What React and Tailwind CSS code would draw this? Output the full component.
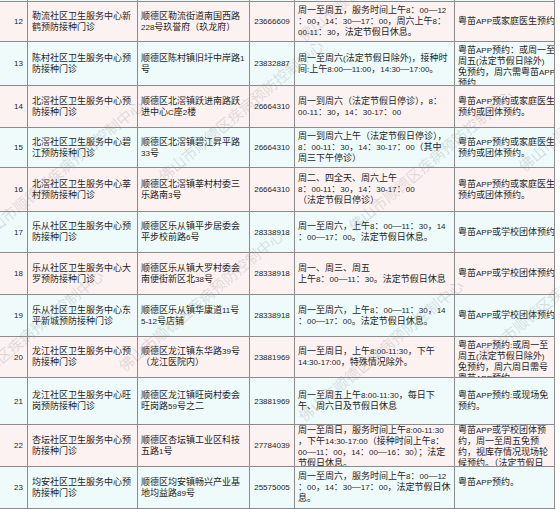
import React from 'react';

// 顺德区预防接种门诊一览（第12-23条）
const rows = [
  {
    no: 12,
    h: 'h-[40px]',
    name: ['勒流社区卫生服务中心新', '鹤预防接种门诊'],
    addr: ['顺德区勒流街道南国西路', '228号玖誉府（玖龙府）'],
    phone: '23666609',
    time: ['周一至周五，服务时间上午8：00—12', '：00，14：30—17：00，周六上午8：', '00-11：30，法定节假日休息。'],
    app: ['粤苗APP或家庭医生预约'],
  },
  {
    no: 13,
    h: 'h-[44px]',
    name: ['陈村社区卫生服务中心预', '防接种门诊'],
    addr: ['顺德区陈村镇旧圩中岸路1', '号'],
    phone: '23832887',
    time: ['周一至周六(法定节假日除外)，接种时', '间:上午8:00—11:00，14:30—17:00。'],
    app: ['粤苗APP预约：或周一至', '周五(法定节假日除外)', '免预约，周六需粤苗APP', '预约'],
  },
  {
    no: 14,
    h: 'h-[42px]',
    name: ['北滘社区卫生服务中心预', '防接种门诊'],
    addr: ['顺德区北滘镇跃进南路跃', '进中心C座2楼'],
    phone: '26664310',
    time: ['周一到周六（法定节假日停诊），8：', '00-11：30，14：30-17：00'],
    app: ['粤苗APP预约或家庭医生', '预约或团体预约。'],
  },
  {
    no: 15,
    h: 'h-[40px]',
    name: ['北滘社区卫生服务中心碧', '江预防接种门诊'],
    addr: ['顺德区北滘镇碧江昇平路', '33号'],
    phone: '26664310',
    time: ['周一到周六上午（法定节假日停诊），', '8：00-11：30，14：30-17：00（其中', '周三下午停诊）'],
    app: ['粤苗APP预约或家庭医生', '预约或团体预约。'],
  },
  {
    no: 16,
    h: 'h-[44px]',
    name: ['北滘社区卫生服务中心莘', '村预防接种门诊'],
    addr: ['顺德区北滘镇莘村村委三', '乐路南3号'],
    phone: '26664310',
    time: ['周二、四全天、周六上午', '8：00-11：30，14：30-17：00', '（法定节假日停诊）'],
    app: ['粤苗APP预约或家庭医生', '预约或团体预约。'],
  },
  {
    no: 17,
    h: 'h-[41px]',
    name: ['乐从社区卫生服务中心预', '防接种门诊'],
    addr: ['顺德区乐从镇平步居委会', '平步校前路6号'],
    phone: '28338918',
    time: ['周一至周六，上午8：00—11：30，14', '：00—17：00。法定节假日休息。'],
    app: ['粤苗APP或学校团体预约'],
  },
  {
    no: 18,
    h: 'h-[42px]',
    name: ['乐从社区卫生服务中心大', '罗预防接种门诊'],
    addr: ['顺德区乐从镇大罗村委会', '南便街新区北38号'],
    phone: '28338918',
    time: ['周一、周三、周五', '上午8：00—11：30。法定节假日休息'],
    app: ['粤苗APP或学校团体预约'],
  },
  {
    no: 19,
    h: 'h-[42px]',
    name: ['乐从社区卫生服务中心东', '平新城预防接种门诊'],
    addr: ['顺德区乐从镇华康道11号', '5-12号店铺'],
    phone: '28338918',
    time: ['周一至周六，上午8：00—11：30，14', '：00—17：00。法定节假日休息。'],
    app: ['粤苗APP或学校团体预约'],
  },
  {
    no: 20,
    h: 'h-[41px]',
    name: ['龙江社区卫生服务中心预', '防接种门诊'],
    addr: ['顺德区龙江镇东华路39号', '（龙江医院内）'],
    phone: '23881969',
    time: ['周一至周日，上午8:00-11:30，下午', '14:30-17:00，特殊情况除外。'],
    app: ['粤苗APP预约:或周一至', '周五(法定节假日除外)', '免预约，周六周日需号', '粤苗APP预约'],
  },
  {
    no: 21,
    h: 'h-[47px]',
    name: ['龙江社区卫生服务中心旺', '岗预防接种门诊'],
    addr: ['顺德区龙江镇旺岗村委会', '旺岗路59号之二'],
    phone: '23881969',
    time: ['周一至周五上午8:00-11:30，每日下', '午、周六日及节假日休息'],
    app: ['粤苗APP预约:或现场免', '预约。'],
  },
  {
    no: 22,
    h: 'h-[42px]',
    tight: true,
    name: ['杏坛社区卫生服务中心预', '防接种门诊'],
    addr: ['顺德区杏坛镇工业区科技', '五路1号'],
    phone: '27784039',
    time: ['周一至周日，服务时间上午8:00-11:30', '，下午14:30-17:00（接种时间上午8：', '00—11：00，14：00—16：30）；法定', '节假日休息。'],
    app: ['粤苗APP或学校团体预', '约，周一至周五免预', '约，视库存情况现场轮', '候预约。（法定节假日', '除外）'],
  },
  {
    no: 23,
    h: 'h-[42px]',
    name: ['均安社区卫生服务中心预', '防接种门诊'],
    addr: ['顺德区均安镇畅兴产业基', '地均益路89号'],
    phone: '25575005',
    time: ['周一至周六，服务时间上午8：00—12', '：00，14：30—17：00，法定节假日休', '息。'],
    app: ['粤苗APP预约。', ''],
  },
];

const marks = [
  'left-[-70px] top-[40px]',
  'left-[110px] top-[-30px]',
  'left-[300px] top-[30px]',
  'left-[470px] top-[-20px]',
  'left-[-20px] top-[230px]',
  'left-[160px] top-[170px]',
  'left-[350px] top-[220px]',
  'left-[520px] top-[160px]',
  'left-[-60px] top-[400px]',
  'left-[120px] top-[360px]',
  'left-[300px] top-[410px]',
  'left-[480px] top-[350px]',
];

// latin runs are set a touch smaller, like the original's bitmap font
function Txt({ s }) {
  const parts = s.split(/([\x20-\x7e]+)/);
  return parts.map((p, i) =>
    /^[\x20-\x7e]+$/.test(p) ? (
      <span key={i} className="text-[8px]">
        {p}
      </span>
    ) : (
      p
    )
  );
}

function Cell({ lines, className = '', tight }) {
  return (
    <div
      className={`flex flex-col overflow-hidden border-r border-[#8c8c8c] ${tight ? 'py-0' : 'py-[3px]'} ${className}`}
    >
      <div className="my-auto">
        {lines.map((l, i) => (
          <div key={i} className="whitespace-nowrap">
            {l ? <Txt s={l} /> : '\u00a0'}
          </div>
        ))}
      </div>
    </div>
  );
}

export default function App() {
  return (
    <div className="relative h-[509px] w-[560px] overflow-hidden bg-white font-['Liberation_Sans','Noto_Sans_CJK_SC',sans-serif] text-[9px] leading-[11px] text-[#1e1e1e]">
      <div className="w-[555px]">
        <div className="grid h-[2px] grid-cols-[28px_110px_112px_45px_160px_100px] border-b border-[#8c8c8c] bg-[#eefbfa]">
          <div className="border-r border-[#8c8c8c]" />
          <div className="border-r border-[#8c8c8c]" />
          <div className="border-r border-[#8c8c8c]" />
          <div className="border-r border-[#8c8c8c]" />
          <div className="border-r border-[#8c8c8c]" />
          <div className="border-r border-[#8c8c8c]" />
        </div>
        {rows.map((r, i) => (
          <div
            key={r.no}
            className={`grid grid-cols-[28px_110px_112px_45px_160px_100px] border-b border-[#8c8c8c] ${r.h} ${
              i % 2 === 0 ? 'bg-[#fdf2f2]' : 'bg-[#eefbfa]'
            }`}
          >
            <Cell lines={[String(r.no)]} className="pl-[10px] text-center" />
            <Cell lines={r.name} tight={r.tight} className="pl-[4px]" />
            <Cell lines={r.addr} tight={r.tight} className="pl-[3px]" />
            <Cell lines={[r.phone]} className="text-center" />
            <Cell lines={r.time} tight={r.tight} className="pl-[3px]" />
            <Cell lines={r.app} tight={r.tight} className="pl-[3px]" />
          </div>
        ))}
      </div>

      {/* 水印 */}
      <div className="pointer-events-none absolute inset-0">
        {marks.map((m, i) => (
          <span
            key={i}
            className={`absolute ${m} origin-left -rotate-[40deg] whitespace-nowrap font-['Noto_Sans_CJK_SC',sans-serif] text-[15px] leading-none text-[#8a8a8a]/25`}
          >
            佛山市顺德区疾病预防控制中心
          </span>
        ))}
      </div>
    </div>
  );
}
